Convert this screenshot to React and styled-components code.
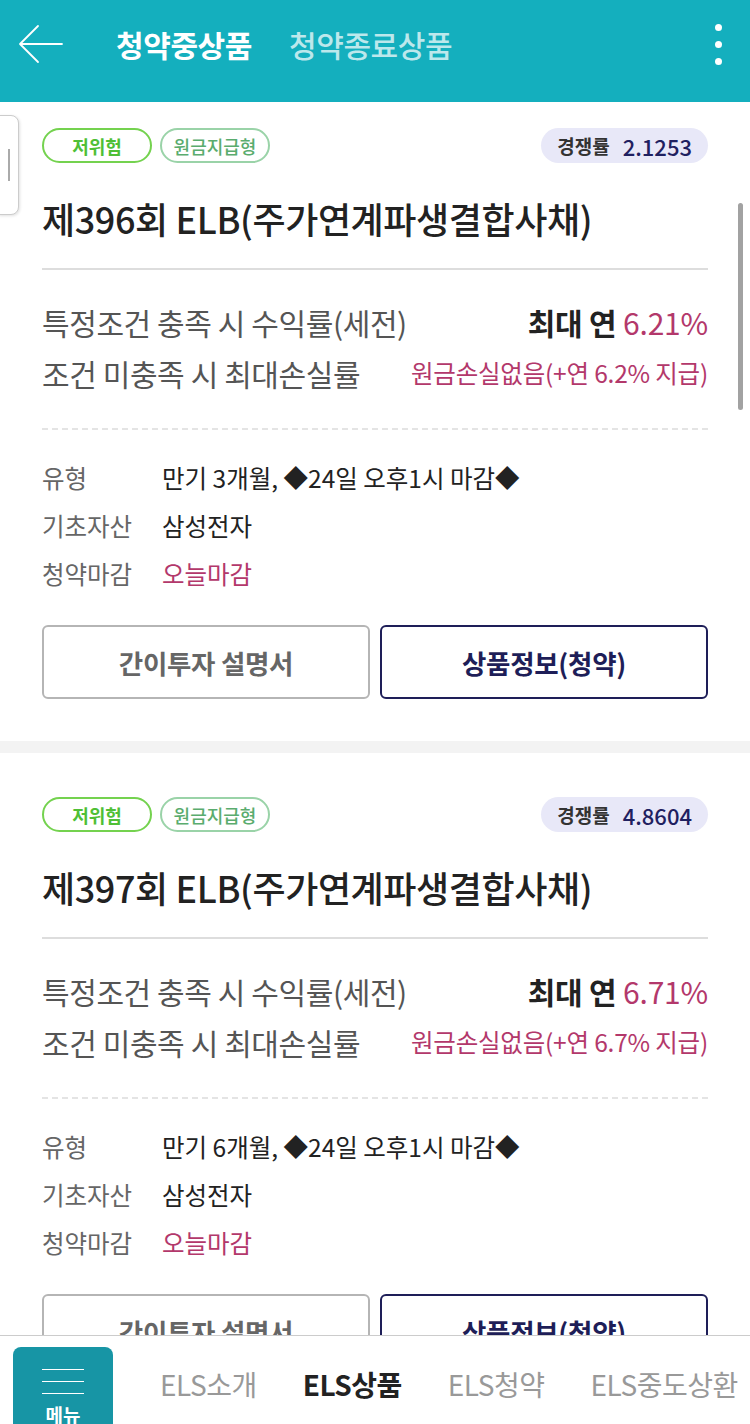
import React from "react";
import styled, { createGlobalStyle } from "styled-components";

const GlobalStyle = createGlobalStyle`
  body {
    margin: 0;
    background: #ffffff;
    font-family: "Noto Sans CJK KR", "Noto Sans", sans-serif;
    overflow: hidden;
  }
`;

const Page = styled.div`
  width: 750px;
  height: 1424px;
  display: flex;
  flex-direction: column;
  overflow: hidden;
`;

const Header = styled.div`
  height: 102px;
  flex-shrink: 0;
  background-color: #14afbe;
  display: flex;
  align-items: center;
  padding: 0 0 14px 18px;
  box-sizing: border-box;
`;

const BackButton = styled.div`
  width: 48px;
  height: 48px;
  display: flex;
  align-items: center;
`;

const Tabs = styled.div`
  display: flex;
  gap: 37px;
  margin-left: 50px;
  flex: 1;
`;

const Tab = styled.div`
  font-size: 30px;
  font-weight: ${(p) => (p.$active ? 700 : 500)};
  color: ${(p) => (p.$active ? "#ffffff" : "rgba(255,255,255,0.72)")};
  letter-spacing: -0.4px;
`;

const Kebab = styled.div`
  width: 40px;
  display: flex;
  flex-direction: column;
  align-items: center;
  gap: 10px;
  margin-right: 12px;
`;

const Dot = styled.span`
  width: 7px;
  height: 7px;
  border-radius: 50%;
  background: #ffffff;
`;

const ScrollArea = styled.div`
  flex: 1;
  position: relative;
  overflow: hidden;
`;

const List = styled.div`
  margin-top: -18px;
  display: flex;
  flex-direction: column;
  gap: 12px;
  background: #f3f3f3;
`;

const Card = styled.div`
  background: #ffffff;
  padding: 44px 42px 42px;
`;

const BadgeRow = styled.div`
  height: 35px;
  display: flex;
  align-items: center;
  gap: 8px;
`;

const Badge = styled.span`
  width: 110px;
  height: 35px;
  box-sizing: border-box;
  border-radius: 18px;
  border: 2px solid ${(p) => p.$border};
  color: ${(p) => p.$color};
  font-size: 18px;
  font-weight: ${(p) => (p.$bold ? 700 : 500)};
  display: flex;
  align-items: center;
  justify-content: center;
`;

const Rate = styled.span`
  margin-left: auto;
  height: 35px;
  padding: 0 16px;
  border-radius: 18px;
  background: #e8e8f8;
  display: flex;
  align-items: center;
  gap: 13px;
`;

const RateLabel = styled.span`
  font-size: 19px;
  font-weight: 700;
  color: #333333;
`;

const RateValue = styled.span`
  font-size: 22px;
  font-weight: 500;
  color: #1f2060;
`;

const Title = styled.h2`
  margin: 30px 0 25px;
  height: 50px;
  line-height: 50px;
  font-size: 36px;
  font-weight: 500;
  color: #222222;
  letter-spacing: -0.4px;
`;

const Divider = styled.div`
  height: 2px;
  background: #dddddd;
`;

const Yield = styled.div`
  padding: 26px 0 30px;
  border-bottom: 2px dashed #e4e4e4;
`;

const YieldRow = styled.div`
  height: 51px;
  display: flex;
  align-items: center;
  justify-content: space-between;
`;

const YieldLabel = styled.span`
  font-size: 30px;
  color: #555555;
  letter-spacing: -0.4px;
`;

const YieldValue = styled.span`
  font-size: ${(p) => (p.$small ? "24.5px" : "30px")};
  font-weight: ${(p) => (p.$bold ? 700 : 400)};
  color: ${(p) => (p.$pink ? "#b3386b" : "#222222")};
  letter-spacing: -0.2px;
`;

const Pink = styled.span`
  color: #b3386b;
  font-weight: 400;
`;

const Info = styled.div`
  padding-top: 23px;
`;

const InfoRow = styled.div`
  height: 48px;
  display: flex;
  align-items: center;
  font-size: 24.5px;
`;

const InfoLabel = styled.span`
  width: 120px;
  color: #666666;
`;

const InfoValue = styled.span`
  color: ${(p) => (p.$pink ? "#b3386b" : "#222222")};
`;

const Buttons = styled.div`
  margin-top: 28px;
  display: grid;
  grid-template-columns: 1fr 1fr;
  gap: 10px;
`;

const Button = styled.button`
  height: 74px;
  border-radius: 6px;
  background: #ffffff;
  border: 2px solid ${(p) => (p.$primary ? "#1e1e58" : "#b5b5b5")};
  color: ${(p) => (p.$primary ? "#1e1e58" : "#666666")};
  font-family: inherit;
  font-size: 26.5px;
  font-weight: 700;
  letter-spacing: -0.3px;
`;

const SideTab = styled.div`
  position: absolute;
  left: -2px;
  top: 13px;
  width: 19px;
  height: 98px;
  background: #ffffff;
  border: 1px solid #cccccc;
  border-radius: 0 8px 8px 0;
  box-shadow: 1px 1px 3px rgba(0, 0, 0, 0.12);
  display: flex;
  align-items: center;
  justify-content: center;
`;

const SideLine = styled.span`
  width: 2px;
  height: 32px;
  background: #aaaaaa;
`;

const ScrollBar = styled.div`
  position: absolute;
  right: 7px;
  top: 101px;
  width: 5px;
  height: 207px;
  border-radius: 3px;
  background: #a2a2a2;
`;

const BottomNav = styled.div`
  height: 89px;
  flex-shrink: 0;
  border-top: 1px solid #cccccc;
  background: #ffffff;
  display: flex;
  align-items: flex-end;
  padding-left: 13px;
  box-sizing: border-box;
  overflow: hidden;
`;

const MenuButton = styled.div`
  width: 100px;
  height: 77px;
  flex-shrink: 0;
  border-radius: 8px 8px 0 0;
  background: #1795a5;
  display: flex;
  flex-direction: column;
  align-items: center;
  padding-top: 22px;
  box-sizing: border-box;
`;

const Bar = styled.span`
  width: 42px;
  height: 3px;
  background: #ffffff;
  margin-bottom: 11px;
`;

const MenuText = styled.span`
  font-size: 19px;
  font-weight: 700;
  color: #ffffff;
  line-height: 1;
  margin-top: 0;
`;

const NavItems = styled.div`
  display: flex;
  gap: 46px;
  margin-left: 47px;
  align-self: center;
  white-space: nowrap;
  padding-top: 8px;
`;

const NavItem = styled.span`
  font-size: 28px;
  font-weight: ${(p) => (p.$active ? 700 : 400)};
  color: ${(p) => (p.$active ? "#222222" : "#999999")};
  letter-spacing: -0.5px;
`;

const products = [
  {
    no: 396,
    rate: "2.1253",
    max: "6.21%",
    pay: "6.2%",
    term: "만기 3개월, ◆24일 오후1시 마감◆",
  },
  {
    no: 397,
    rate: "4.8604",
    max: "6.71%",
    pay: "6.7%",
    term: "만기 6개월, ◆24일 오후1시 마감◆",
  },
];

const ProductCard = ({ p }) => (
  <Card>
    <BadgeRow>
      <Badge $bold $border="#74d24f" $color="#4fbf36">
        저위험
      </Badge>
      <Badge $border="#9ad3a8" $color="#5aac6e">
        원금지급형
      </Badge>
      <Rate>
        <RateLabel>경쟁률</RateLabel>
        <RateValue>{p.rate}</RateValue>
      </Rate>
    </BadgeRow>
    <Title>제{p.no}회 ELB(주가연계파생결합사채)</Title>
    <Divider />
    <Yield>
      <YieldRow>
        <YieldLabel>특정조건 충족 시 수익률(세전)</YieldLabel>
        <YieldValue $bold>
          최대 연 <Pink>{p.max}</Pink>
        </YieldValue>
      </YieldRow>
      <YieldRow>
        <YieldLabel>조건 미충족 시 최대손실률</YieldLabel>
        <YieldValue $small $pink>
          원금손실없음(+연 {p.pay} 지급)
        </YieldValue>
      </YieldRow>
    </Yield>
    <Info>
      <InfoRow>
        <InfoLabel>유형</InfoLabel>
        <InfoValue>{p.term}</InfoValue>
      </InfoRow>
      <InfoRow>
        <InfoLabel>기초자산</InfoLabel>
        <InfoValue>삼성전자</InfoValue>
      </InfoRow>
      <InfoRow>
        <InfoLabel>청약마감</InfoLabel>
        <InfoValue $pink>오늘마감</InfoValue>
      </InfoRow>
    </Info>
    <Buttons>
      <Button>간이투자 설명서</Button>
      <Button $primary>상품정보(청약)</Button>
    </Buttons>
  </Card>
);

export default function App() {
  return (
    <Page>
      <GlobalStyle />
      <Header>
        <BackButton>
          <svg width="46" height="40" viewBox="0 0 46 40" fill="none">
            <path
              d="M44 20H3M20 2L2 20l18 18"
              stroke="#ffffff"
              strokeWidth="1.8"
              strokeLinecap="round"
              strokeLinejoin="round"
            />
          </svg>
        </BackButton>
        <Tabs>
          <Tab $active>청약중상품</Tab>
          <Tab>청약종료상품</Tab>
        </Tabs>
        <Kebab>
          <Dot />
          <Dot />
          <Dot />
        </Kebab>
      </Header>
      <ScrollArea>
        <List>
          {products.map((p) => (
            <ProductCard key={p.no} p={p} />
          ))}
        </List>
        <SideTab>
          <SideLine />
        </SideTab>
        <ScrollBar />
      </ScrollArea>
      <BottomNav>
        <MenuButton>
          <Bar />
          <Bar />
          <Bar />
          <MenuText>메뉴</MenuText>
        </MenuButton>
        <NavItems>
          <NavItem>ELS소개</NavItem>
          <NavItem $active>ELS상품</NavItem>
          <NavItem>ELS청약</NavItem>
          <NavItem>ELS중도상환</NavItem>
        </NavItems>
      </BottomNav>
    </Page>
  );
}
